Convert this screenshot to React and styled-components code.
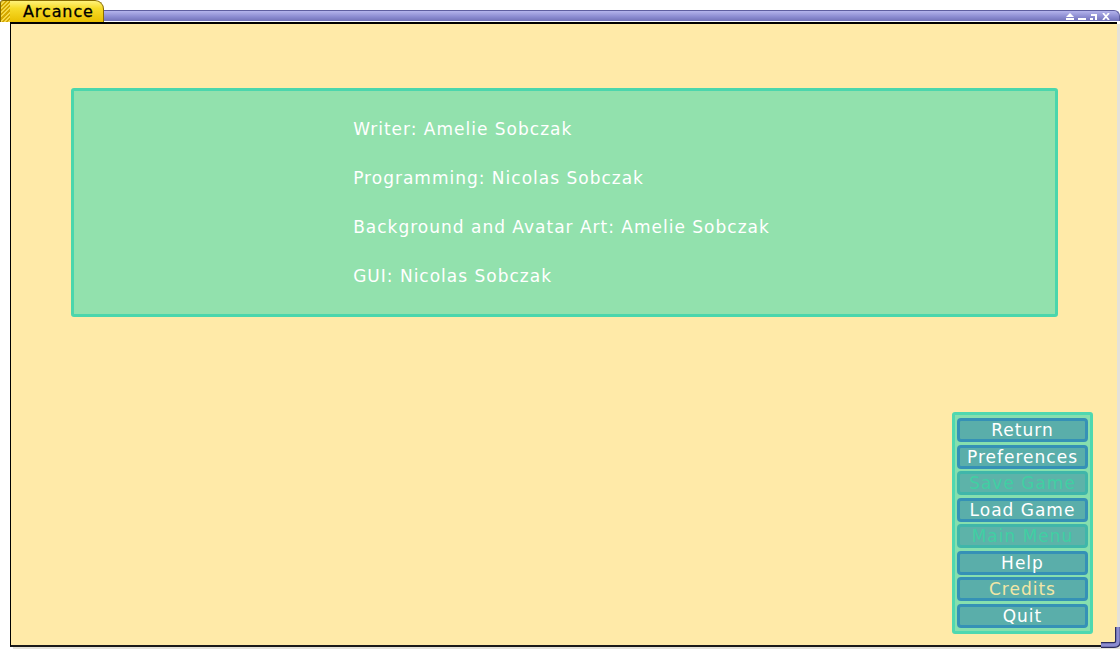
import React from "react";
import styled, { createGlobalStyle } from "styled-components";

const GlobalStyle = createGlobalStyle`
  html, body {
    margin: 0;
    padding: 0;
    background: #ffffff;
  }
  body {
    font-family: "DejaVu Sans", "Liberation Sans", sans-serif;
  }
`;

const credits = [
  "Writer: Amelie Sobczak",
  "Programming: Nicolas Sobczak",
  "Background and Avatar Art: Amelie Sobczak",
  "GUI: Nicolas Sobczak",
];

const menuItems = [
  { label: "Return" },
  { label: "Preferences" },
  { label: "Save Game", disabled: true },
  { label: "Load Game" },
  { label: "Main Menu", disabled: true },
  { label: "Help" },
  { label: "Credits", selected: true },
  { label: "Quit" },
];

function App() {
  return (
    <>
      <GlobalStyle />
      <Window>
        <TitleRow>
          <TitleTab>
            <Stripes />
            <TitleText>Arcance</TitleText>
          </TitleTab>
          <TitleBar>
            <Controls>
              <svg width="8" height="7" viewBox="0 0 8 7">
                <path d="M4 0 L8 4 L0 4 Z" fill="#fff" />
                <rect x="0" y="5" width="8" height="2" fill="#fff" />
              </svg>
              <svg width="8" height="7" viewBox="0 0 8 7">
                <rect x="0" y="5" width="8" height="2" fill="#fff" />
              </svg>
              <svg width="8" height="7" viewBox="0 0 8 7">
                <path d="M1 1 H7 V7 H5 V3 H1 Z" fill="#fff" />
                <rect x="0" y="5" width="3" height="2" fill="#fff" />
              </svg>
              <svg width="8" height="7" viewBox="0 0 8 7">
                <path d="M1 0 L7 7 M7 0 L1 7" stroke="#fff" strokeWidth="1.8" />
              </svg>
            </Controls>
          </TitleBar>
        </TitleRow>
        <Body>
          <CreditsPanel>
            <CreditsList>
              {credits.map((line) => (
                <CreditLine key={line}>{line}</CreditLine>
              ))}
            </CreditsList>
          </CreditsPanel>
          <MenuRow>
            <MenuPanel>
              {menuItems.map((item) => (
                <MenuButton
                  key={item.label}
                  $disabled={item.disabled}
                  $selected={item.selected}
                >
                  {item.label}
                </MenuButton>
              ))}
            </MenuPanel>
          </MenuRow>
          <ResizeGrip width="22" height="22" viewBox="0 0 22 22">
            <path
              d="M17 1 V14 Q17 18 13 18 H1"
              fill="none"
              stroke="#2c2c5c"
              strokeWidth="6"
              strokeLinecap="round"
            />
            <path
              d="M17 1 V14 Q17 18 13 18 H1"
              fill="none"
              stroke="#8c8cd0"
              strokeWidth="3.5"
              strokeLinecap="round"
            />
          </ResizeGrip>
        </Body>
      </Window>
    </>
  );
}

export default App;

const Window = styled.div`
  width: 1120px;
  height: 649px;
  display: flex;
  flex-direction: column;
  overflow: hidden;
  background: #ffffff;
`;

const TitleRow = styled.div`
  display: flex;
  align-items: flex-end;
  height: 22px;
  flex-shrink: 0;
`;

const TitleTab = styled.div`
  position: relative;
  width: 104px;
  height: 22px;
  box-sizing: border-box;
  border: 1px solid #8a6d00;
  border-bottom: none;
  border-radius: 3px 9px 0 0;
  background: linear-gradient(#fff27a 0%, #f7dc2a 35%, #e9bf00 100%);
  display: flex;
  align-items: center;
  z-index: 2;
`;

const Stripes = styled.div`
  width: 9px;
  align-self: stretch;
  border-radius: 3px 0 0 0;
  background: repeating-linear-gradient(
    135deg,
    #d6a800 0px,
    #d6a800 1.5px,
    #f4d84a 1.5px,
    #f4d84a 3px
  );
`;

const TitleText = styled.span`
  margin-left: 13px;
  font-family: "DejaVu Sans", sans-serif;
  font-size: 16px;
  color: #000;
  line-height: 20px;
  letter-spacing: 0.9px;
  -webkit-text-stroke: 0.3px #000;
`;

const TitleBar = styled.div`
  flex: 1;
  height: 11px;
  margin-bottom: 1px;
  margin-left: -2px;
  box-sizing: border-box;
  border-top: 1px solid #5e5ea0;
  border-right: 1px solid #5e5ea0;
  border-radius: 0 6px 0 0;
  background: linear-gradient(#b4b4ec, #8a8ad0 60%, #7272b8);
  display: flex;
  justify-content: flex-end;
  align-items: center;
  padding-right: 9px;
`;

const Controls = styled.div`
  display: flex;
  gap: 4px;
  align-items: center;
`;

const Body = styled.div`
  position: relative;
  flex: 1;
  margin-left: 10px;
  margin-right: 3px;
  margin-bottom: 2px;
  border-left: 1px solid #000;
  border-top: 2px solid #000;
  border-bottom: 2px solid #1a1a1a;
  box-shadow: 3px 2px 0 #e4e2da;
  background: #ffeaa8;
  display: flex;
  flex-direction: column;
  padding: 64px 24px 11px 60px;
`;

const CreditsPanel = styled.div`
  height: 229px;
  box-sizing: border-box;
  margin-right: 35px;
  border: 3px solid #4bd6ac;
  border-radius: 3px;
  background: #92e1ad;
  display: flex;
  justify-content: center;
  align-items: center;
`;

const CreditsList = styled.div`
  display: flex;
  flex-direction: column;
  margin-top: 1px;
  margin-left: -6px;
`;

const CreditLine = styled.div`
  font-size: 17px;
  letter-spacing: 1px;
  line-height: 49px;
  color: #ffffff;
  white-space: nowrap;
`;

const MenuRow = styled.div`
  flex: 1;
  display: flex;
  justify-content: flex-end;
  align-items: flex-end;
`;

const MenuPanel = styled.div`
  width: 141px;
  height: 222px;
  box-sizing: border-box;
  border: 3px solid #4fd8b0;
  border-radius: 3px;
  background: #86dfae;
  padding: 3px 2px;
  display: flex;
  flex-direction: column;
  justify-content: space-between;
`;

const MenuButton = styled.div`
  height: 24px;
  box-sizing: border-box;
  border: 3px solid ${(p) => (p.$disabled ? "#40b6aa" : "#3591b6")};
  border-radius: 4px;
  background: ${(p) => (p.$disabled ? "#5db3a9" : "#5aaeaa")};
  color: ${(p) =>
    p.$disabled ? "#40cfa3" : p.$selected ? "#f2e6a6" : "#ffffff"};
  font-size: 17px;
  letter-spacing: 1px;
  line-height: 18px;
  text-align: center;
  white-space: nowrap;
`;

const ResizeGrip = styled.svg`
  position: absolute;
  right: -6px;
  bottom: -4px;
  z-index: 3;
`;
